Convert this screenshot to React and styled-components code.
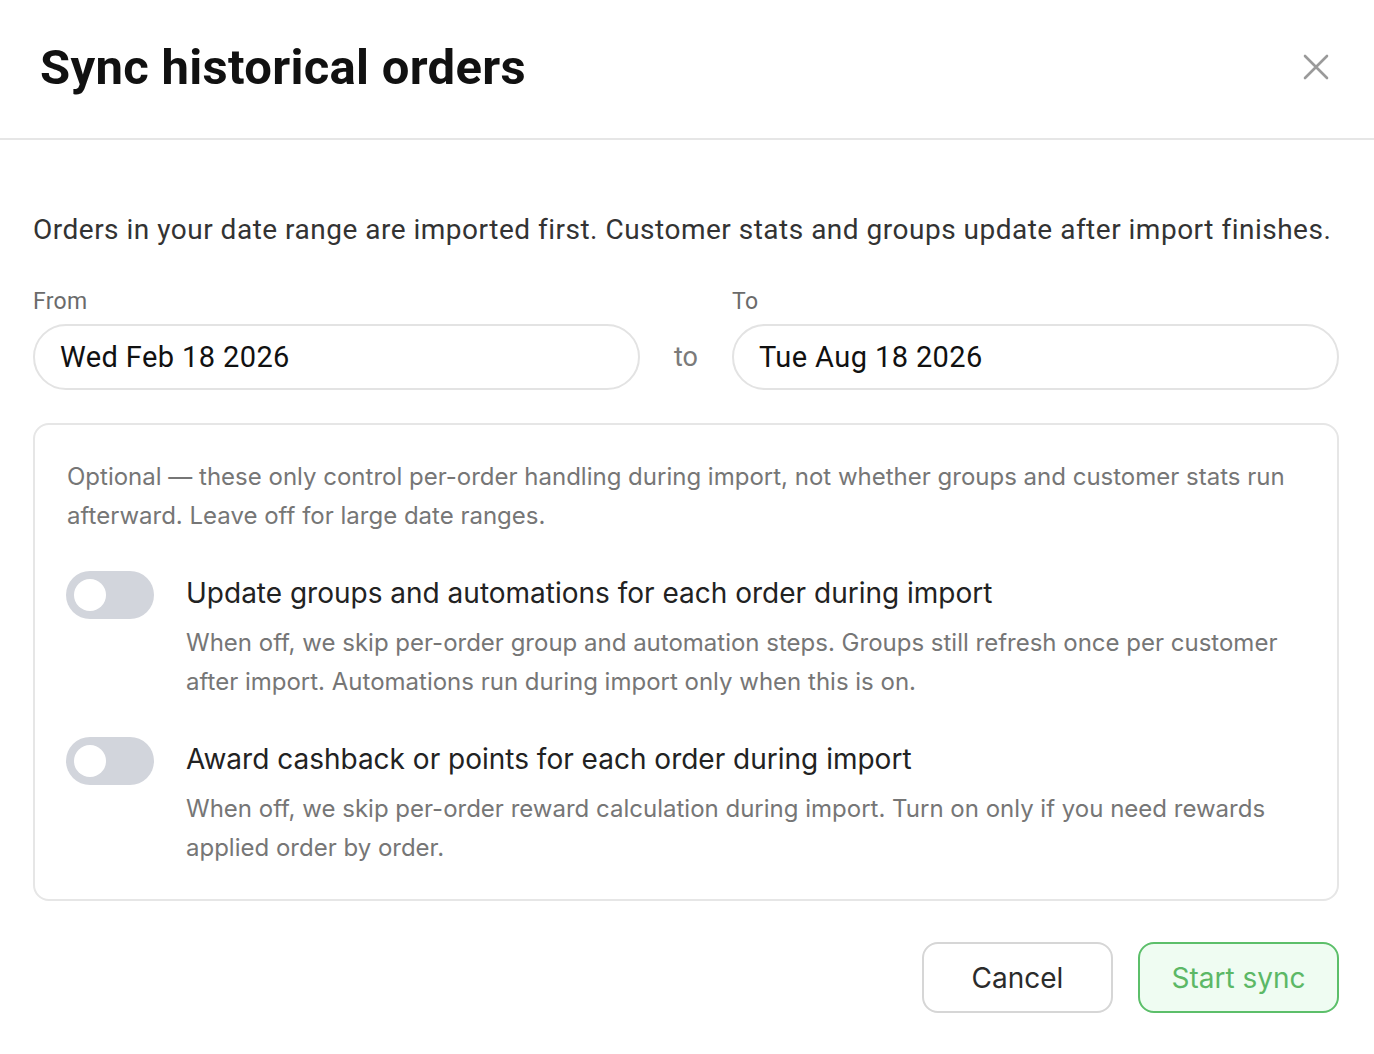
import styled, { createGlobalStyle } from "styled-components";

const GlobalStyle = createGlobalStyle`
  * {
    box-sizing: border-box;
  }
  body {
    margin: 0;
    background: #fff;
    font-family: Roboto, "Liberation Sans", sans-serif;
  }
`;

const options = [
  {
    title: "Update groups and automations for each order during import",
    text: "When off, we skip per-order group and automation steps. Groups still refresh once per customer after import. Automations run during import only when this is on.",
  },
  {
    title: "Award cashback or points for each order during import",
    text: "When off, we skip per-order reward calculation during import. Turn on only if you need rewards applied order by order.",
  },
];

const CloseIcon = () => (
  <svg width="26" height="26" viewBox="0 0 26 26" fill="none">
    <path
      d="M2 2L24 24M24 2L2 24"
      stroke="#9a9a9a"
      strokeWidth="2.6"
      strokeLinecap="round"
    />
  </svg>
);

const Toggle = ({ on }) => (
  <Switch $on={on}>
    <span />
  </Switch>
);

const App = () => {
  return (
    <>
      <GlobalStyle />
      <Modal>
        <Header>
          <h1>Sync historical orders</h1>
          <CloseButton>
            <CloseIcon />
          </CloseButton>
        </Header>
        <Body>
          <Intro>
            Orders in your date range are imported first. Customer stats and
            groups update after import finishes.
          </Intro>
          <DateRow>
            <Field>
              <label>From</label>
              <DateInput>Wed Feb 18 2026</DateInput>
            </Field>
            <Separator>to</Separator>
            <Field>
              <label>To</label>
              <DateInput>Tue Aug 18 2026</DateInput>
            </Field>
          </DateRow>
          <OptionsCard>
            <Note>
              Optional — these only control per-order handling during import,
              not whether groups and customer stats run afterward. Leave off for
              large date ranges.
            </Note>
            {options.map((option) => (
              <OptionRow key={option.title}>
                <Toggle on={false} />
                <div>
                  <OptionTitle>{option.title}</OptionTitle>
                  <OptionText>{option.text}</OptionText>
                </div>
              </OptionRow>
            ))}
          </OptionsCard>
          <Footer>
            <Button>Cancel</Button>
            <Button $primary>Start sync</Button>
          </Footer>
        </Body>
      </Modal>
    </>
  );
};

const Modal = styled.div`
  width: 1374px;
  min-height: 1054px;
  background: #fff;
`;

const Header = styled.header`
  height: 140px;
  padding: 0 45px 4px 40px;
  border-bottom: 2px solid #e6e6e6;
  display: flex;
  align-items: center;
  justify-content: space-between;
  h1 {
    margin: 0;
    font-size: 49px;
    font-weight: 700;
    color: #111;
    letter-spacing: 0.3px;
  }
`;

const CloseButton = styled.button`
  border: none;
  background: none;
  padding: 0;
  width: 26px;
  height: 26px;
  cursor: pointer;
  display: flex;
`;

const Body = styled.div`
  padding: 72px 35px 0 33px;
`;

const Intro = styled.p`
  margin: 0;
  font-size: 28px;
  line-height: 36px;
  letter-spacing: 0.5px;
  color: #333;
`;

const DateRow = styled.div`
  margin-top: 40px;
  display: flex;
  align-items: flex-end;
  gap: 34px;
`;

const Field = styled.div`
  flex: 1;
  display: flex;
  flex-direction: column;
  gap: 8px;
  label {
    font-size: 23px;
    line-height: 28px;
    letter-spacing: 0.3px;
    color: #6b6b6b;
  }
`;

const DateInput = styled.div`
  height: 66px;
  border: 2px solid #e3e3e3;
  border-radius: 33px;
  padding: 0 25px;
  display: flex;
  align-items: center;
  font-size: 29px;
  letter-spacing: 0.4px;
  color: #111;
`;

const Separator = styled.span`
  height: 66px;
  display: flex;
  align-items: center;
  font-size: 27px;
  color: #7a7a7a;
`;

const OptionsCard = styled.section`
  margin-top: 33px;
  border: 2px solid #e6e6e6;
  border-radius: 16px;
  padding: 32px 32px 32px 31px;
  font-family: Inter, "Noto Sans", sans-serif;
`;

const Note = styled.p`
  margin: 0 0 36px;
  padding-left: 1px;
  font-size: 24px;
  line-height: 39px;
  color: #767676;
`;

const OptionRow = styled.div`
  display: flex;
  align-items: flex-start;
  gap: 32px;
  & + & {
    margin-top: 36px;
  }
`;

const Switch = styled.span`
  flex: none;
  width: 88px;
  height: 48px;
  border-radius: 24px;
  background: ${({ $on }) => ($on ? "#5cbf6a" : "#d2d5dc")};
  display: flex;
  align-items: center;
  padding: 0 8px;
  justify-content: ${({ $on }) => ($on ? "flex-end" : "flex-start")};
  span {
    width: 32px;
    height: 32px;
    border-radius: 50%;
    background: #fff;
  }
`;

const OptionTitle = styled.div`
  font-size: 28px;
  line-height: 44px;
  color: #222;
`;

const OptionText = styled.p`
  margin: 8px 0 0;
  font-size: 24px;
  line-height: 39px;
  color: #767676;
`;

const Footer = styled.div`
  margin-top: 41px;
  display: flex;
  justify-content: flex-end;
  gap: 25px;
`;

const Button = styled.button`
  height: 71px;
  min-width: ${({ $primary }) => ($primary ? "201px" : "191px")};
  padding: 0 24px;
  border-radius: 16px;
  font-family: Inter, "Noto Sans", sans-serif;
  font-size: 28px;
  cursor: pointer;
  border: 2px solid ${({ $primary }) => ($primary ? "#5cbf6a" : "#d6d6d6")};
  background: ${({ $primary }) => ($primary ? "#effcf2" : "#fff")};
  color: ${({ $primary }) => ($primary ? "#5cb866" : "#2b2b2b")};
`;

export default App;
